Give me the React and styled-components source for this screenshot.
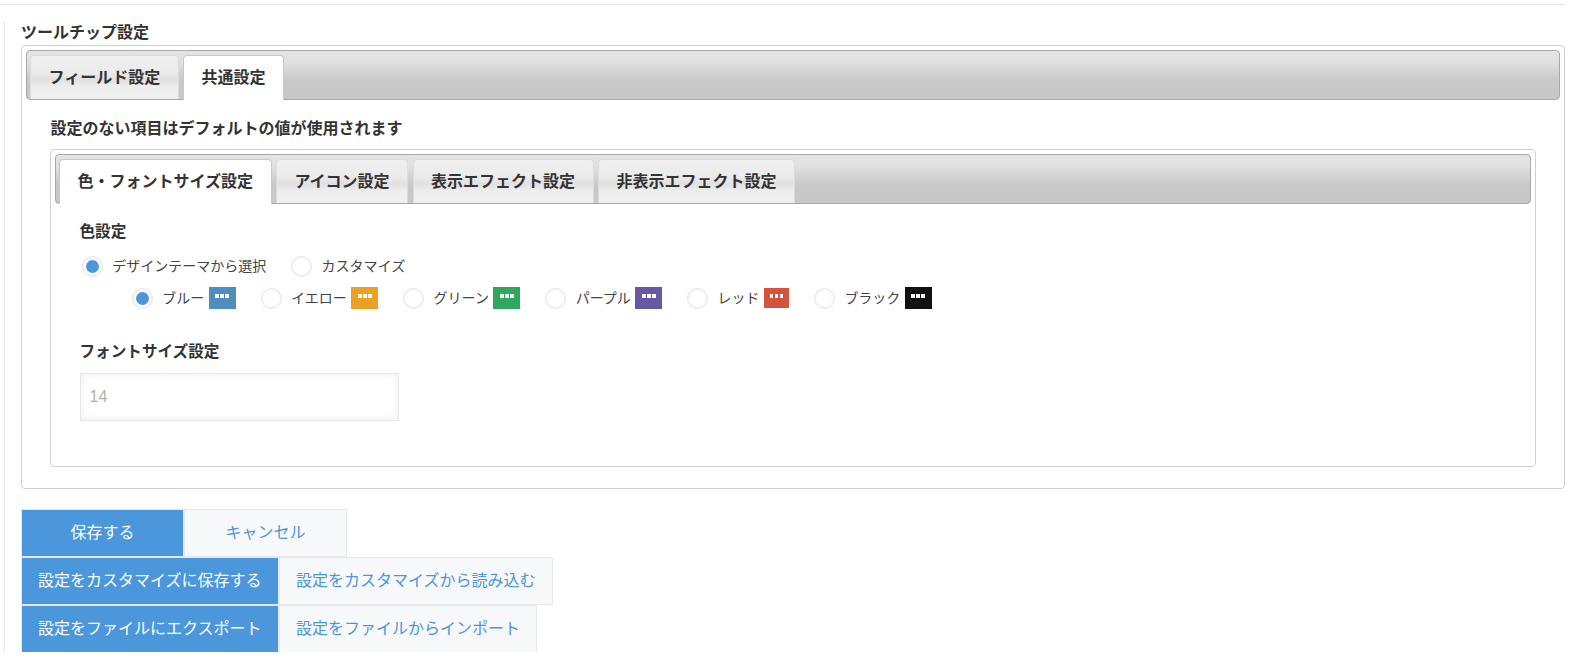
import React from "react";
import styled, { createGlobalStyle } from "styled-components";

const GlobalStyle = createGlobalStyle`
  html, body {
    margin: 0;
    padding: 0;
    background: #fff;
  }
  body {
    font-family: "Liberation Sans", "Noto Sans CJK JP", sans-serif;
    color: #333;
  }
  * {
    box-sizing: border-box;
  }
`;

const TopRule = styled.div`
  width: 1565px;
  height: 1px;
  margin-top: 4px;
  background: #e6e6e6;
`;

const Main = styled.div`
  width: 1561px;
  height: 631px;
  margin: 16px 0 0 4px;
  padding-left: 16px;
  border-left: 1px solid #e6e6e6;
`;

const SectionTitle = styled.div`
  height: 24px;
  font-size: 16px;
  font-weight: 700;
  line-height: 23px;
`;

const Box = styled.div`
  padding: 4px;
  border: 1px solid #d0d0d0;
  border-radius: 4px;
  background: #fff;
`;

const TabBar = styled.div`
  display: flex;
  gap: 4.4px;
  height: 49.5px;
  padding: 4px 3px 0;
  border: 1px solid #a8a8a8;
  border-radius: 4px;
  background: linear-gradient(#e4e4e4 0%, #e0e0e0 25%, #c9c9c9 60%, #c8c8c8 100%);
`;

const Tab = styled.div`
  height: ${(p) => (p.$active ? "45px" : "44px")};
  padding: 0 17.5px;
  border: 1px solid ${(p) => (p.$active ? "#c8c8c8" : "#dcdcdc")};
  border-bottom: none;
  border-radius: 4px 4px 0 0;
  background: ${(p) =>
    p.$active
      ? "#fff"
      : "linear-gradient(#efefef 0%, #ebebeb 40%, #e0e0e0 55%, #eeeeee 72%, #f0f0f0 100%)"};
  font-size: 16px;
  font-weight: 700;
  line-height: 44px;
  white-space: nowrap;
`;

const OuterBody = styled.div`
  padding: 17px 24px 17px 24px;
`;

const Notice = styled.div`
  height: 28px;
  margin-bottom: 4.5px;
  padding-left: 0.6px;
  font-size: 16px;
  font-weight: 700;
  line-height: 24px;
`;

const InnerBody = styled.div`
  padding: 16px 25px 41px 24.5px;
`;

const FieldLabel = styled.div`
  font-size: 15.6px;
  font-weight: 700;
  line-height: 24px;
`;

const RadioRow = styled.div`
  display: flex;
  align-items: center;
  gap: 25.2px;
  height: 21px;
  margin-top: ${(p) => p.$top}px;
  padding-left: ${(p) => p.$indent}px;
`;

const RadioItem = styled.label`
  display: flex;
  align-items: center;
  font-size: 14px;
  line-height: 21px;
  color: #444;
  white-space: nowrap;
`;

const RadioCircle = styled.span`
  display: flex;
  align-items: center;
  justify-content: center;
  flex: none;
  width: 21px;
  height: 21px;
  margin-right: 9.2px;
  border: 1px solid #e4e4e4;
  border-radius: 50%;
  background: #fff;
  box-shadow: inset 0 0 3px rgba(0, 0, 0, 0.1);
  &::after {
    content: "";
    display: ${(p) => (p.$checked ? "block" : "none")};
    width: 13px;
    height: 13px;
    border-radius: 50%;
    background: #4c96db;
  }
`;

const Swatch = styled.span`
  display: flex;
  justify-content: center;
  gap: 1.3px;
  width: ${(p) => (p.$small ? 25 : 27)}px;
  height: ${(p) => (p.$small ? 20 : 22)}px;
  margin-left: 4.4px;
  padding-top: ${(p) => (p.$small ? 6 : 7)}px;
  background: ${(p) => p.$color};
`;

const Dot = styled.span`
  width: 3.8px;
  height: 3.8px;
  background: #fff;
`;

const FontLabel = styled(FieldLabel)`
  margin-top: 31.5px;
`;

const NumberInput = styled.div`
  width: 319.5px;
  height: 48px;
  margin-top: 8.5px;
  padding-left: 9px;
  border: 1px solid #e5e7e8;
  background: #fff;
  box-shadow: inset 0 0 9px rgba(0, 0, 0, 0.07);
  color: #b4b0ad;
  font-size: 16px;
  line-height: 46px;
`;

const ButtonArea = styled.div`
  margin-top: 20.5px;
`;

const ButtonRow = styled.div`
  display: flex;
  height: 48px;
`;

const Button = styled.div`
  min-width: ${(p) => p.$min || 0}px;
  padding: 0 ${(p) => (p.$primary ? 16 : 16.4)}px;
  border: 1px solid #e6e8ea;
  background: ${(p) => (p.$primary ? "#4c96db" : "#f7f8fa")};
  color: ${(p) => (p.$primary ? "#fff" : "#4c96db")};
  font-size: 16px;
  line-height: 46px;
  text-align: center;
  white-space: nowrap;
`;

const colors = [
  { name: "ブルー", color: "#4d8ebd", checked: true },
  { name: "イエロー", color: "#e9a126" },
  { name: "グリーン", color: "#2fa85f" },
  { name: "パープル", color: "#6658a5" },
  { name: "レッド", color: "#d6523c", small: true },
  { name: "ブラック", color: "#111111" },
];

const App = () => {
  return (
    <>
      <GlobalStyle />
      <TopRule />
      <Main>
        <SectionTitle>ツールチップ設定</SectionTitle>
        <Box>
          <TabBar>
            <Tab>フィールド設定</Tab>
            <Tab $active>共通設定</Tab>
          </TabBar>
          <OuterBody>
            <Notice>設定のない項目はデフォルトの値が使用されます</Notice>
            <Box>
              <TabBar>
                <Tab $active>色・フォントサイズ設定</Tab>
                <Tab>アイコン設定</Tab>
                <Tab>表示エフェクト設定</Tab>
                <Tab>非表示エフェクト設定</Tab>
              </TabBar>
              <InnerBody>
                <FieldLabel>色設定</FieldLabel>
                <RadioRow $top={12.5} $indent={2.5}>
                  <RadioItem>
                    <RadioCircle $checked />
                    デザインテーマから選択
                  </RadioItem>
                  <RadioItem>
                    <RadioCircle />
                    カスタマイズ
                  </RadioItem>
                </RadioRow>
                <RadioRow $top={10.5} $indent={52.5}>
                  {colors.map((c) => (
                    <RadioItem key={c.name}>
                      <RadioCircle $checked={c.checked} />
                      {c.name}
                      <Swatch $color={c.color} $small={c.small}>
                        <Dot />
                        <Dot />
                        <Dot />
                      </Swatch>
                    </RadioItem>
                  ))}
                </RadioRow>
                <FontLabel>フォントサイズ設定</FontLabel>
                <NumberInput>14</NumberInput>
              </InnerBody>
            </Box>
          </OuterBody>
        </Box>
        <ButtonArea>
          <ButtonRow>
            <Button $primary $min={163}>
              保存する
            </Button>
            <Button $min={163}>キャンセル</Button>
          </ButtonRow>
          <ButtonRow>
            <Button $primary>設定をカスタマイズに保存する</Button>
            <Button>設定をカスタマイズから読み込む</Button>
          </ButtonRow>
          <ButtonRow>
            <Button $primary>設定をファイルにエクスポート</Button>
            <Button>設定をファイルからインポート</Button>
          </ButtonRow>
        </ButtonArea>
      </Main>
    </>
  );
};

export default App;
